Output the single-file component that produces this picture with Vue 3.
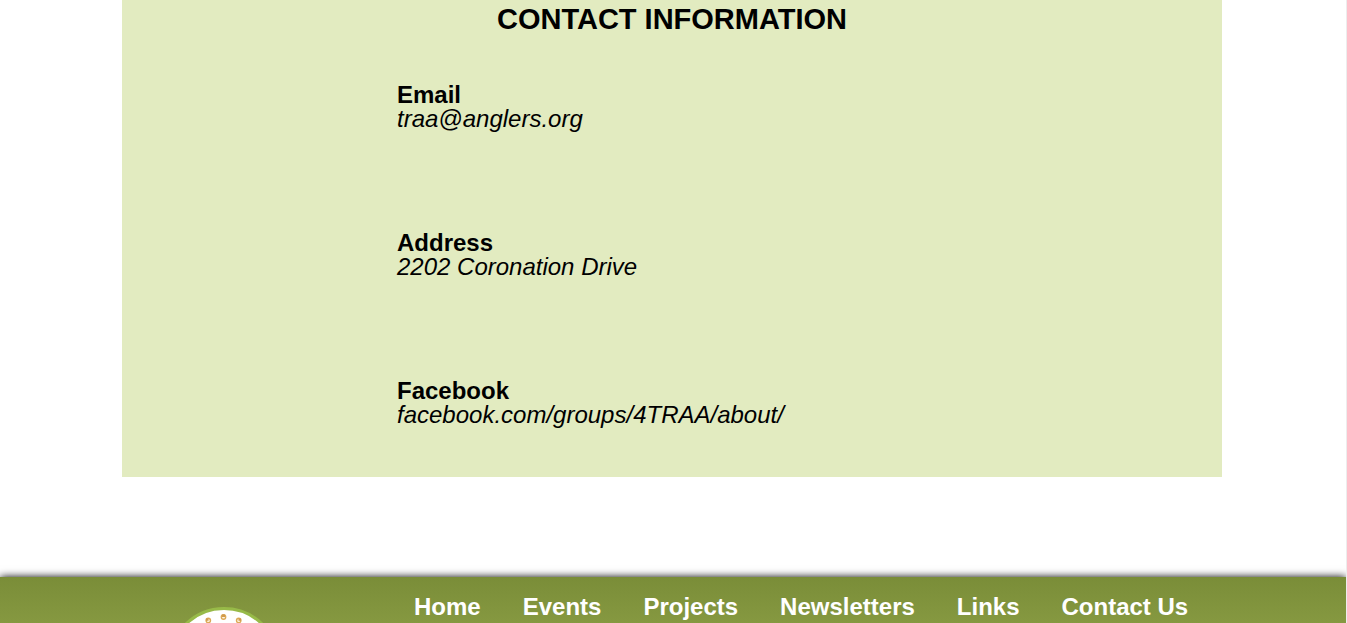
<script setup>
const contacts = [
  { label: 'Email', value: 'traa@anglers.org' },
  { label: 'Address', value: '2202 Coronation Drive' },
  { label: 'Facebook', value: 'facebook.com/groups/4TRAA/about/' },
]
const links = ['Home', 'Events', 'Projects', 'Newsletters', 'Links', 'Contact Us']
</script>

<template>
  <div class="page">
    <main>
      <section class="contact">
        <h1>CONTACT INFORMATION</h1>
        <dl>
          <div v-for="item in contacts" :key="item.label" class="entry">
            <dt>{{ item.label }}</dt>
            <dd>{{ item.value }}</dd>
          </div>
        </dl>
      </section>
    </main>
    <footer>
      <svg class="logo" viewBox="0 0 112 112" aria-hidden="true">
        <circle cx="56" cy="56" r="54.5" fill="#fff" stroke="#97ba48" stroke-width="3" />
        <g fill="#fff4e0" stroke="#dcaa58" stroke-width="1.4">
          <circle cx="40.3" cy="13.5" r="2.2" />
          <circle cx="55.5" cy="10" r="2.2" />
          <circle cx="70.7" cy="13.5" r="2.2" />
        </g>
        <path
          d="M37.9 11.5h2.6v2.2h-2.6zM54 7.6h3v2.4h-3zM70.5 11.5h2.6v2.2h-2.6z"
          fill="#d09a4c"
        />
      </svg>
      <nav>
        <a v-for="link in links" :key="link" href="#">{{ link }}</a>
      </nav>
    </footer>
  </div>
</template>

<style>
html {
  overflow: hidden;
}
body {
  margin: 0;
  background: #fff;
}
</style>

<style scoped>
.page {
  display: flex;
  flex-direction: column;
  height: 100vh;
  box-sizing: border-box;
  border-right: 1px solid #ededed;
  overflow: hidden;
  font-family: "Liberation Sans", Arial, sans-serif;
  font-size: 24px;
  line-height: 24px;
  color: #000;
}
main {
  padding: 0 2px 100px 0;
}
.contact {
  max-width: 1100px;
  margin: 0 auto;
  padding-bottom: 50px;
  background: #e2ebc0;
}
h1 {
  margin: 0;
  padding: 3px 0 48px;
  font-size: 29px;
  line-height: 32px;
  text-align: center;
}
dl {
  display: flex;
  flex-direction: column;
  gap: 100px;
  margin: 0 0 0 25%;
}
dt {
  font-weight: bold;
}
dd {
  margin: 0;
  font-style: italic;
}
footer {
  display: flex;
  flex: 1 0 auto;
  align-items: flex-start;
  padding: 18px 0 18px 168px;
  background: linear-gradient(#7a8d38, #a2b556);
  box-shadow: 0 0 8px #000;
}
.logo {
  flex: none;
  width: 112px;
  height: 112px;
  margin: 12px 134px 0 0;
}
nav {
  display: flex;
  gap: 42px;
}
a {
  font-weight: bold;
  color: #fff;
  text-decoration: none;
  white-space: nowrap;
}
</style>
